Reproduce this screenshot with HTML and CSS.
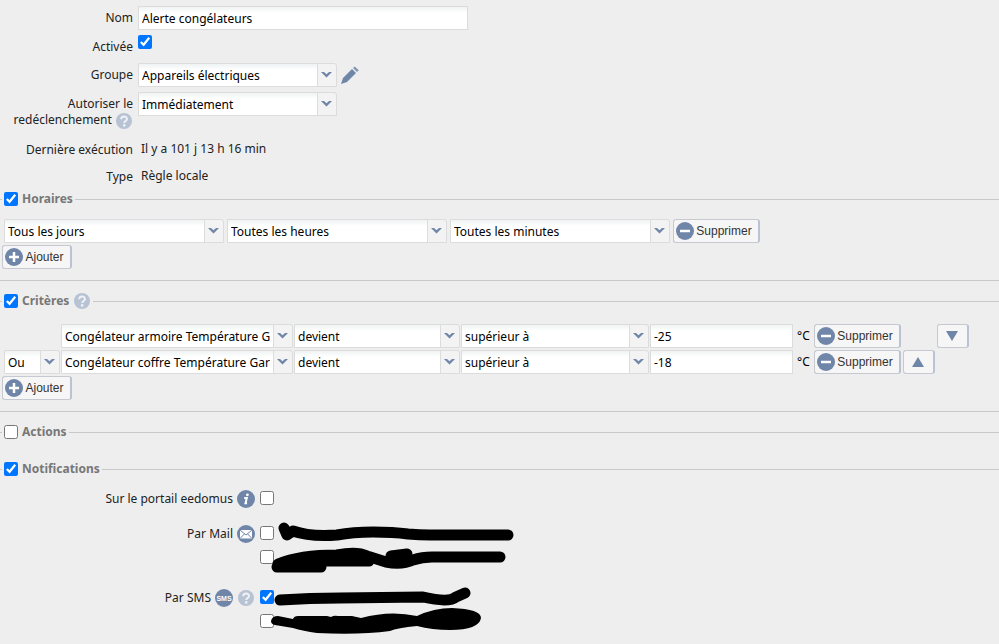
FILE: index.html
```html
<!DOCTYPE html>
<html lang="fr">
<head>
<meta charset="utf-8">
<title>Alerte congélateurs</title>
<link rel="stylesheet" href="styles.css">
</head>
<body>
<svg class="sprite" aria-hidden="true">
  <symbol id="help" viewBox="0 0 18 18"><circle cx="9" cy="9" r="8" fill="#b7c2d3"/><path d="M6.2 7.2C6.2 3.6 12 3.7 12 7c0 2-2.8 2-2.8 4" fill="none" stroke="#eef1f5" stroke-width="2"/><circle cx="9.2" cy="13.4" r="1.3" fill="#eef1f5"/></symbol>
  <symbol id="info" viewBox="0 0 18 18"><circle cx="9" cy="9" r="9" fill="#6f86a8"/><circle cx="10.4" cy="4.8" r="1.4" fill="#fff"/><path d="M7.2 8h2.6L8.5 13.2h1.6" fill="none" stroke="#fff" stroke-width="2"/></symbol>
  <symbol id="mail" viewBox="0 0 18 18"><circle cx="9" cy="9" r="9" fill="#6f86a8"/><rect x="3" y="5" width="12" height="8.500" fill="#fff"/><path d="M3 5l6 5 6-5M3 13.500l4.300-4.500M15 13.500L10.700 9" fill="none" stroke="#6f86a8"/></symbol>
  <symbol id="sms" viewBox="0 0 18 18"><circle cx="9" cy="9" r="9" fill="#6f86a8"/><text x="9" y="11.500" text-anchor="middle" class="sms-text">SMS</text></symbol>
  <symbol id="plus" viewBox="0 0 18 18"><circle cx="9" cy="9" r="9" fill="#6f86a8"/><path d="M9 4v10M4 9h10" stroke="#fff" stroke-width="2.500"/></symbol>
  <symbol id="minus" viewBox="0 0 18 18"><circle cx="9" cy="9" r="9" fill="#6f86a8"/><path d="M4 9h10" stroke="#fff" stroke-width="2.500"/></symbol>
  <symbol id="pencil" viewBox="0 0 18 18"><path d="M0 18l2-6L11 3l4 4-9 9z" fill="#6f86a8"/><path d="M12 2l1.800-1.500 4 3.800L16 6z" fill="#8396b4"/></symbol>
</svg>
<form>
  <div class="properties">
    <label for="nom">Nom</label>
    <div><input class="field name" id="nom" type="text" value="Alerte congélateurs"></div>
    <label for="activee">Activée</label>
    <div><input type="checkbox" id="activee" checked></div>
    <label for="groupe">Groupe</label>
    <div class="line"><select class="field short" id="groupe"><option>Appareils électriques</option></select><button type="button" class="plain" aria-label="Modifier le groupe"><svg class="icon"><use href="#pencil"/></svg></button></div>
    <label for="delai">Autoriser le redéclenchement <svg class="icon inline"><use href="#help"/></svg></label>
    <div><select class="field short" id="delai"><option>Immédiatement</option></select></div>
    <span class="caption">Dernière exécution</span>
    <output>Il y a 101 j 13 h 16 min</output>
    <span class="caption">Type</span>
    <output>Règle locale</output>
  </div>

  <fieldset class="closed">
    <legend><input type="checkbox" id="horaires" checked><label for="horaires">Horaires</label></legend>
    <div class="schedule">
      <select class="field" aria-label="Jours"><option>Tous les jours</option></select>
      <select class="field" aria-label="Heures"><option>Toutes les heures</option></select>
      <select class="field" aria-label="Minutes"><option>Toutes les minutes</option></select>
      <button type="button" class="button"><svg class="icon"><use href="#minus"/></svg>Supprimer</button>
    </div>
    <button type="button" class="button add"><svg class="icon"><use href="#plus"/></svg>Ajouter</button>
  </fieldset>

  <fieldset class="closed criteria-set">
    <legend><input type="checkbox" id="criteres" checked><label for="criteres">Critères</label><svg class="icon"><use href="#help"/></svg></legend>
    <div class="criteria">
      <span></span>
      <select class="field" aria-label="Périphérique"><option>Congélateur armoire Température Garage</option></select>
      <select class="field" aria-label="Événement"><option>devient</option></select>
      <select class="field" aria-label="Comparaison"><option>supérieur à</option></select>
      <input class="field" type="text" aria-label="Valeur" value="-25">
      <span class="unit">°C</span>
      <button type="button" class="button"><svg class="icon"><use href="#minus"/></svg>Supprimer</button>
      <span></span>
      <button type="button" class="button move" aria-label="Descendre"><svg class="arrow" viewBox="0 0 12 10"><path d="M0 0h12L6 10z"/></svg></button>
    </div>
    <div class="criteria">
      <select class="field" aria-label="Opérateur"><option>Ou</option></select>
      <select class="field" aria-label="Périphérique"><option>Congélateur coffre Température Garage</option></select>
      <select class="field" aria-label="Événement"><option>devient</option></select>
      <select class="field" aria-label="Comparaison"><option>supérieur à</option></select>
      <input class="field" type="text" aria-label="Valeur" value="-18">
      <span class="unit">°C</span>
      <button type="button" class="button"><svg class="icon"><use href="#minus"/></svg>Supprimer</button>
      <button type="button" class="button move" aria-label="Monter"><svg class="arrow" viewBox="0 0 12 10"><path d="M0 10h12L6 0z"/></svg></button>
    </div>
    <button type="button" class="button add"><svg class="icon"><use href="#plus"/></svg>Ajouter</button>
  </fieldset>

  <fieldset class="actions">
    <legend><input type="checkbox" id="actions"><label for="actions">Actions</label></legend>
  </fieldset>

  <fieldset class="notifications">
    <legend><input type="checkbox" id="notifications" checked><label for="notifications">Notifications</label></legend>
    <div class="channels">
      <label class="channel" for="portail">Sur le portail eedomus <svg class="icon"><use href="#info"/></svg></label>
      <div class="choices"><input type="checkbox" id="portail"></div>
      <label class="channel" for="mail1">Par Mail <svg class="icon"><use href="#mail"/></svg></label>
      <div class="choices multiple"><input type="checkbox" id="mail1"><input type="checkbox" aria-label="Deuxième adresse"></div>
      <label class="channel" for="sms1">Par SMS <svg class="icon"><use href="#sms"/></svg><svg class="icon"><use href="#help"/></svg></label>
      <div class="choices multiple"><input type="checkbox" id="sms1" checked><input type="checkbox" aria-label="Deuxième numéro"></div>
      <svg class="masks" viewBox="270 515 250 125" aria-hidden="true">
        <g fill="none" stroke="#000" stroke-width="11" stroke-linecap="round" stroke-linejoin="round">
          <path d="M284 527L287 534L293 530Q310 536 337 534Q353 531 373 531Q393 531 408 533Q420 534 430 534H508"/>
          <path d="M277 566H321M278 563Q300 554 337 554Q357 550 367 555L386 561Q402 564 413 559Q422 556 432 556H500"/>
          <path d="M300 560H345L368 560M391 555L407 553M345 560H369"/>
          <path d="M280 599Q310 597 340 597L423 596Q449 602 456 596L465 592"/>
        </g>
        <path d="M271 620Q272 615 278 615L293 618Q294 615 298 615H327L331 616Q334 614 338 615H352L361 617Q390 609 417 615Q434 607 452 607Q481 608 481 617Q479 629 450 629Q432 629 417 625Q397 627 390 630Q360 634 317 632Q303 630 293 627L275 624Q271 623 271 620Z"/>
      </svg>
    </div>
  </fieldset>
</form>
</body>
</html>
```

FILE: styles.css
```css
* { box-sizing: border-box; }

body {
  margin: 0;
  background: #eee;
  color: #222;
  font: 12px/16px "Noto Sans", sans-serif;
}

.sprite { display: none; }
.icon { width: 18px; height: 18px; flex: none; }
.inline { vertical-align: middle; }
.sms-text { font: bold 7px "Liberation Sans", sans-serif; fill: #fff; }

input[type="checkbox"] {
  display: block;
  width: 14px;
  height: 14px;
  margin: 0;
  flex: none;
}

.field {
  display: block;
  width: 100%;
  min-width: 0;
  height: 24px;
  margin: 0;
  padding: 0 3px;
  border: 1px solid #dcdcdc;
  border-radius: 0;
  background: linear-gradient(#eff3f3, #fff 6px);
  color: #000;
  font: 12px/16px "Noto Sans", sans-serif;
}

select.field {
  appearance: none;
  padding: 1px 22px 0 3px;
  border-radius: 0 3px 0 0;
  background:
    url("data:image/svg+xml,%3Csvg xmlns='http://www.w3.org/2000/svg' width='19' height='22'%3E%3Cpath d='M0 0h19v22H0z' fill='%23f3f3f3'/%3E%3Cpath d='M.5 0v22' stroke='%23dcdcdc'/%3E%3Cpath d='M4 8h3l2.500 2.200L12 8h3l-5.500 5.500z' fill='%236f86a8'/%3E%3C/svg%3E") right top no-repeat,
    linear-gradient(#eff3f3, #fff 6px);
}

.name { max-width: 330px; }
.short { width: 199px; }

.properties {
  display: grid;
  grid-template-columns: 133px 1fr;
  grid-template-rows: 29px 28px 29px 46px 27px 24px;
  column-gap: 5px;
  padding-top: 6px;
}
.properties > label,
.caption { padding-top: 4px; text-align: right; }
.properties output { padding: 3px 3px 0; }
.line { display: flex; gap: 4px; align-items: flex-start; }

.plain { display: flex; padding: 3px 0; border: 0; background: none; }

.button {
  display: flex;
  align-items: center;
  justify-content: center;
  gap: 2px;
  width: 87px;
  height: 24px;
  padding: 0 4px 0 0;
  border: 1px solid #c6c9d0;
  border-right: 2px solid #b9c3d3;
  border-radius: 3px;
  background: #f6f6f6;
  color: #333;
  font: 12px/16px "Liberation Sans", sans-serif;
}
.button.add { width: 70px; margin: 2px 0 0 2px; }
.button.move { width: 32px; padding: 0 2px 0 0; }
.arrow { width: 12px; height: 10px; fill: #6f86a8; }

fieldset {
  min-width: 0;
  margin: 0;
  padding: 10px 0 0;
  border: 0 solid #c8c8c8;
  border-top-width: 1px;
}
.closed {
  margin-bottom: 10px;
  padding-bottom: 11px;
  border-bottom-width: 1px;
}
.criteria-set { padding-top: 13px; }
.actions { padding: 0 0 17px; }

legend {
  display: flex;
  align-items: center;
  gap: 4px;
  height: 20px;
  margin-left: 2px;
  padding: 0 2px;
  color: #777;
  font-weight: bold;
}

.schedule {
  display: grid;
  grid-template-columns: repeat(3, 220px) auto;
  gap: 3px;
  justify-content: start;
  padding-left: 4px;
}

.criteria {
  display: grid;
  grid-template-columns: 56px 232px 166px 188px 143px 19px 88px 33px 32px;
  column-gap: 1px;
  padding: 0 0 2px 4px;
}
.criteria + .button { margin-top: 0; }
.unit { padding: 4px 0 0 3px; color: #000; }

.channels {
  position: relative;
  display: grid;
  grid-template-columns: 255px 1fr;
  column-gap: 5px;
}
.channel {
  display: flex;
  justify-content: flex-end;
  align-items: center;
  gap: 4px;
  height: 20px;
}
.choices {
  display: grid;
  gap: 10px;
  align-content: start;
  padding: 2px 0 19px;
}
.multiple { padding-bottom: 24px; }
.channel:last-of-type + .multiple { padding-bottom: 16px; }
.masks {
  position: absolute;
  left: 270px;
  top: 27px;
  width: 250px;
  height: 125px;
}
```
